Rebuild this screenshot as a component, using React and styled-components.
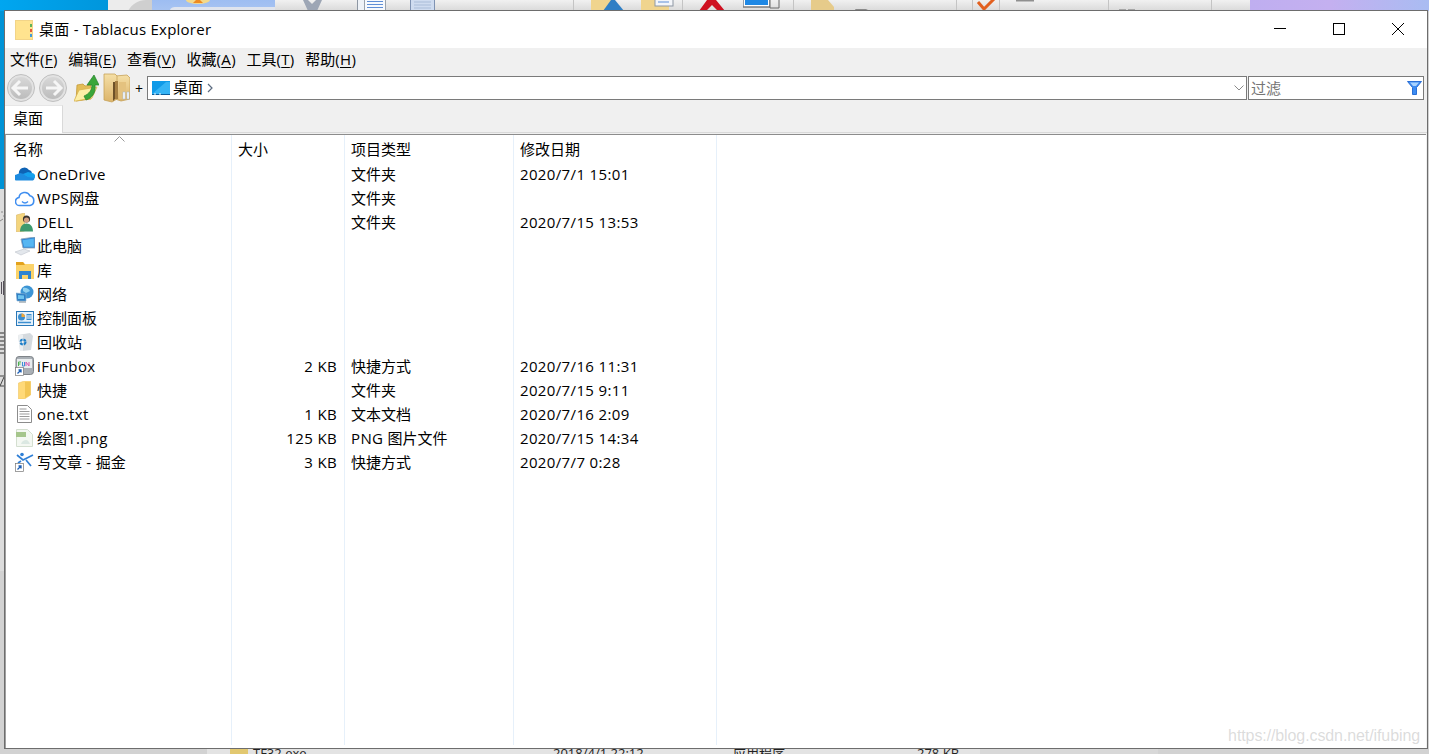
import React from 'react'
import styled, {createGlobalStyle} from 'styled-components'

const FONT = `"Open Sans", "Noto Sans CJK SC", sans-serif`

const Global = createGlobalStyle`
	html, body {
		margin: 0;
		padding: 0;
		height: 100%;
		overflow: hidden;
	}
	body {
		font-family: ${FONT};
		font-size: 15px;
		color: #000;
		background: #d2d2d2;
	}
	svg {
		display: block;
		flex: none;
	}
`

const Desktop = styled.div`
	position: relative;
	width: 1429px;
	height: 754px;
	overflow: hidden;
	background: #d2d2d2;
`
const TopStrip = styled.div`
	display: flex;
	height: 11px;
	overflow: hidden;
`
const Segment = styled.div`
	width: ${props => props.w}px;
	flex: ${props => (props.grow ? 1 : 'none')};
	height: 11px;
	background: ${props => props.bg || 'linear-gradient(#f1f1f1, #d9d9d9)'};
	border-right: ${props => (props.line ? '1px solid #c4c4c4' : 'none')};
	box-sizing: border-box;
	overflow: hidden;
	display: flex;
	padding-left: ${props => props.pad || 0}px;
	gap: ${props => props.gap || 0}px;
`
const LeftColumn = styled.div`
	width: 4px;
	height: 560px;
	overflow: hidden;
	background: linear-gradient(#0093d6 178px, #dcdcdc 178px);
	padding-top: 198px;
	box-sizing: border-box;
`
const LeftMark = styled.div`
	width: 4px;
	height: ${props => props.h}px;
	margin-bottom: ${props => props.mb}px;
`
const BottomStrip = styled.div`
	position: absolute;
	left: 207px;
	width: 951px;
	bottom: 0;
	height: 6px;
	background: linear-gradient(90deg, #e3e3e3 773px, #d8d8d8 773px);
	overflow: hidden;
	display: flex;
	font-size: 13px;
	line-height: 11px;
	color: #222;
	padding-left: 23px;
	box-sizing: border-box;
`
const BottomCell = styled.span`
	width: ${props => props.w}px;
	flex: none;
	white-space: nowrap;
	display: flex;
	gap: 5px;
`
const Window = styled.div`
	position: absolute;
	left: 4px;
	top: 10px;
	width: 1424px;
	height: 739px;
	box-sizing: border-box;
	border: 1px solid #6d6d6d;
	background: #f0f0f0;
	display: flex;
	flex-direction: column;
`
const TitleBar = styled.div`
	height: 37px;
	flex: none;
	background: #fff;
	display: flex;
	align-items: center;
	padding-left: 10px;
`
const Title = styled.div`
	margin-left: 5px;
	flex: 1;
	line-height: 37px;
	letter-spacing: 0.25px;
`
const WinButton = styled.div`
	width: 59px;
	height: 37px;
	display: flex;
	align-items: center;
	justify-content: center;
	padding-bottom: 2px;
	box-sizing: border-box;
`
const MenuBar = styled.div`
	height: 24px;
	flex: none;
	display: flex;
	align-items: center;
	gap: 10.5px;
	padding-left: 5px;
`
const MenuItem = styled.span`
	line-height: 22px;
	height: 24px;
	white-space: nowrap;
	u {
		text-underline-offset: 2px;
	}
`
const Latin = styled.span`
	letter-spacing: 0.36px;
`
const ToolBar = styled.div`
	height: 24px;
	margin-top: 4px;
	flex: none;
	display: flex;
	align-items: center;
	padding-left: 2px;
	padding-right: 3px;
`
const RoundButton = styled.div`
	width: 28px;
	height: 28px;
	margin-right: ${props => props.mr || 0}px;
	flex: none;
`
const ToolIcon = styled.div`
	margin-left: ${props => props.ml}px;
	flex: none;
`
const Plus = styled.span`
	width: 12px;
	margin-left: 5px;
	font-size: 14px;
	flex: none;
`
const AddressBox = styled.div`
	flex: 1;
	height: 24px;
	box-sizing: border-box;
	border: 1px solid #7a7a7a;
	background: #fff;
	display: flex;
	align-items: center;
	padding: 0 2px 0 4px;
	gap: 3px;
`
const Crumb = styled.span`
	line-height: 20px;
	height: 22px;
`
const CrumbArrow = styled.div`
	margin-left: 1px;
	flex: 1;
`
const FilterBox = styled.div`
	width: 176px;
	margin-left: 1px;
	height: 24px;
	box-sizing: border-box;
	border: 1px solid #7a7a7a;
	background: #fff;
	display: flex;
	align-items: center;
	justify-content: space-between;
	padding: 0 1px 0 2px;
	flex: none;
`
const FilterHint = styled.span`
	color: #757575;
	line-height: 22px;
`
const TabBar = styled.div`
	height: 33px;
	padding-top: 5px;
	box-sizing: border-box;
	flex: none;
	border-bottom: 1px solid #d9d9d9;
	margin-bottom: 1px;
`
const Tab = styled.div`
	width: 58px;
	height: 28px;
	box-sizing: border-box;
	background: #fff;
	border-right: 1px solid #d9d9d9;
	border-top: 1px solid #e6e6e6;
	padding-left: 8px;
	line-height: 24px;
`
const List = styled.div`
	flex: 1;
	min-height: 0;
	display: flex;
	background: #fff;
	border-top: 1px solid #8c8c8c;
	border-left: 1px solid #a0a0a0;
	margin-right: 1px;
	position: relative;
	padding-bottom: 3px;
`
const Column = styled.div`
	width: ${props => props.w}px;
	flex: none;
	box-sizing: border-box;
	border-right: 1px solid #e6f0fa;
`
const HeaderCell = styled.div`
	height: 27px;
	line-height: 28px;
	padding-left: ${props => props.pad || 6}px;
	white-space: nowrap;
`
const Cell = styled.div`
	height: 24px;
	line-height: 24px;
	white-space: nowrap;
	display: flex;
	align-items: center;
	padding: 0 7px 0 6px;
	justify-content: ${props => (props.right ? 'flex-end' : 'flex-start')};
`
const NameCell = styled(Cell)`
	padding-left: 9px;
	gap: 3px;
`
const IconSlot = styled.div`
	width: 19px;
	height: 20px;
	flex: none;
	display: flex;
	align-items: center;
	justify-content: center;
`
const SortCaret = styled.div`
	position: absolute;
	left: 108px;
	top: 1px;
`
const Watermark = styled.div`
	position: absolute;
	right: 9px;
	bottom: 8px;
	font-family: "Liberation Sans", sans-serif;
	font-size: 16px;
	line-height: 20px;
	letter-spacing: -0.1px;
	color: rgba(170, 170, 170, 0.42);
`

// latin runs are a little wider in the original font
const Mixed = ({text}) =>
	(text || '')
		.split(/([\x00-\x7f]+)/)
		.filter(Boolean)
		.map((part, i) => (/^[\x00-\x7f]/.test(part) ? <Latin key={i}>{part}</Latin> : <span key={i}>{part}</span>))

const FolderNote = () => (
	<svg width="19" height="20" viewBox="0 0 19 20">
		<rect x="0.5" y="0.5" width="17" height="19" fill="#ffe38f" stroke="#f2d488" />
		<rect x="15" y="4" width="2" height="3" fill="#5fb35a" />
		<rect x="15" y="9" width="2" height="3" fill="#e25b3c" />
		<rect x="15" y="14" width="2" height="3" fill="#3f9bd8" />
	</svg>
)
const Minimize = () => (
	<svg width="12" height="12" viewBox="0 0 12 12">
		<path d="M0 5.5H12" stroke="#000" />
	</svg>
)
const Maximize = () => (
	<svg width="12" height="12" viewBox="0 0 12 12">
		<rect x="0.5" y="0.5" width="11" height="11" fill="none" stroke="#000" />
	</svg>
)
const Close = () => (
	<svg width="12" height="12" viewBox="0 0 12 12">
		<path d="M0 0L12 12M12 0L0 12" stroke="#000" />
	</svg>
)
const NavArrow = ({flip}) => (
	<svg width="28" height="28" viewBox="0 0 28 28">
		<defs>
			<linearGradient id="navg" x1="0" y1="0" x2="0" y2="1">
				<stop offset="0" stopColor="#d8d8d8" />
				<stop offset="1" stopColor="#bcbcbc" />
			</linearGradient>
		</defs>
		<circle cx="14" cy="14" r="13.5" fill="#e2e2e2" stroke="#bfbfbf" />
		<circle cx="14" cy="14" r="11" fill="url(#navg)" />
		<path
			d={flip ? 'M15 7l7 7-7 7M22 14H7' : 'M13 7l-7 7 7 7M6 14h15'}
			fill="none"
			stroke="#f6f6f6"
			strokeWidth="3"
		/>
	</svg>
)
const UpFolder = () => (
	<svg width="25" height="28" viewBox="0 0 25 28">
		<path d="M3 11l6-1 2 2 6-1v14l-15 2z" fill="#e3bd57" stroke="#c49a3a" strokeWidth="0.8" />
		<path d="M5 16l18-3-5 11-16 3H0z" fill="#fdeea6" stroke="#d8b34e" strokeWidth="0.8" />
		<path d="M10 22c5-2 8-6 8-11h-5l7-10 5 10h-4c1 8-3 13-9 15z" fill="#3aa63a" stroke="#23812a" strokeWidth="0.7" />
	</svg>
)
const TallFolders = () => (
	<svg width="27" height="30" viewBox="0 0 27 30">
		<defs>
			<linearGradient id="tan" x1="0" y1="0" x2="0" y2="1">
				<stop offset="0" stopColor="#f5dfa6" />
				<stop offset="1" stopColor="#dcb46a" />
			</linearGradient>
		</defs>
		<path d="M12 3l12-1 3 3v21l-9 2-6-2z" fill="url(#tan)" stroke="#c6a259" strokeWidth="0.8" />
		<path d="M1 1h11l2 2v23l-5 3-8-2z" fill="url(#tan)" stroke="#c6a259" strokeWidth="0.8" />
		<path d="M10 9h2v17l-2 2z" fill="#6e5128" />
		<path d="M12 8h3v18h-3z" fill="#a67f42" />
		<path d="M16 9h7v17h-7z" fill="#e4c27f" />
		<rect x="20" y="19" width="2" height="7" fill="#fff" stroke="#9db6d8" strokeWidth="0.5" />
		<rect x="24" y="19" width="2" height="7" fill="#fff" stroke="#9db6d8" strokeWidth="0.5" />
	</svg>
)
const DesktopBlue = () => (
	<svg width="18" height="14" viewBox="0 0 18 14">
		<rect width="18" height="14" fill="#0f9ae8" />
		<path d="M0 13L14 1h4v12z" fill="#35b4f5" />
		<path d="M0 13h18v1H0z" fill="#0a5d9c" />
		<path d="M2 13h2M7 13h2" stroke="#fff" />
	</svg>
)
const SmallArrow = () => (
	<svg width="6" height="10" viewBox="0 0 6 10">
		<path d="M1 1l4 4-4 4" fill="none" stroke="#5b6b80" strokeWidth="1.2" />
	</svg>
)
const Chevron = () => (
	<svg width="10" height="6" viewBox="0 0 10 6">
		<path d="M0.5 0.5L5 5l4.5-4.5" fill="none" stroke="#8a8a8a" />
	</svg>
)
const Funnel = () => (
	<svg width="15" height="14" viewBox="0 0 15 14">
		<path d="M0.5 0.5h14L9.5 6.5v7h-4v-7z" fill="#3d8cf2" stroke="#2a6fd6" />
		<path d="M3 1.5h9L9 5H6z" fill="#a9d3ff" />
	</svg>
)
const Caret = () => (
	<svg width="11" height="6" viewBox="0 0 11 6">
		<path d="M0.5 5.5l5-5 5 5" fill="none" stroke="#9a9a9a" />
	</svg>
)

const Shortcut = () => (
	<g>
		<rect x="0.5" y="11.5" width="8" height="8" fill="#fff" stroke="#777" strokeWidth="0.7" />
		<path d="M2.5 17.500l3.500-3.500M3.500 14H6v2.500" fill="none" stroke="#1d5fb5" strokeWidth="1.300" />
	</g>
)
const OneDriveIcon = () => (
	<svg width="20" height="14" viewBox="0 0 20 14">
		<path d="M4 7a5.500 5.500 0 0 1 10-4 4 4 0 0 1 3 4l-9 2z" fill="#0e63b5" />
		<path d="M2.500 13.500A3 3 0 0 1 1.500 7.500L5 6l4 1 3 2 7 1a2.500 2.500 0 0 1-1 3.500z" fill="#1c8be0" />
		<path d="M8 7l5-2 4 1a3.500 3.500 0 0 1 3 5l-7-1z" fill="#15a1ee" />
	</svg>
)
const WpsIcon = () => (
	<svg width="20" height="17" viewBox="0 0 20 17">
		<path
			d="M5 15.500a4 4 0 0 1-1-8 5.800 5.800 0 0 1 11-1.700 5 5 0 0 1 0 9.700z"
			fill="#fff"
			stroke="#3f8ef0"
			strokeWidth="1.600"
		/>
		<path d="M7 11.500c2 2 4 2 6 0" fill="none" stroke="#3f8ef0" strokeWidth="1.400" />
	</svg>
)
const UserIcon = () => (
	<svg width="17" height="19" viewBox="0 0 17 19">
		<path d="M0.500 2l8-2v18l-8 1z" fill="#f4d57d" stroke="#dab765" strokeWidth="0.600" />
		<circle cx="10.500" cy="6" r="3.600" fill="#3b3530" />
		<circle cx="10.500" cy="7" r="2.600" fill="#d39f80" />
		<path d="M4 18.500c0-5 2.500-8 6.500-8s6.500 3 6.500 8z" fill="#3d9a6e" />
	</svg>
)
const ComputerIcon = () => (
	<svg width="20" height="19" viewBox="0 0 20 19">
		<path d="M6 2l14-2v11L8 11z" fill="#2f86d6" stroke="#8ca3b8" strokeWidth="0.800" />
		<path d="M7.500 3.300L18.800 1.500v8.200L9 9.800z" fill="#56b6f2" />
		<path d="M0 15l9-3 6 2-9 4z" fill="#e3e7ec" stroke="#bfc5cc" strokeWidth="0.600" />
	</svg>
)
const LibraryIcon = () => (
	<svg width="18" height="17" viewBox="0 0 18 17">
		<path d="M0 0h7l2 2h9v15H0z" fill="#fbd36a" />
		<path d="M0 0h7l2 3H0z" fill="#e3a21d" />
		<path d="M3 9h12v8h-3v-4H6v4H3z" fill="#2f84d0" />
	</svg>
)
const NetworkIcon = () => (
	<svg width="18" height="18" viewBox="0 0 18 18">
		<circle cx="11" cy="7" r="6.500" fill="#3d94d4" />
		<path d="M7 3c3-1 6 1 7 3l-4 2-3-2z" fill="#8fd0ef" />
		<path d="M0 8l10 1v7H1z" fill="#2e7fc5" stroke="#8bb4d3" strokeWidth="0.600" />
		<path d="M2 10l6 .5V14H2z" fill="#6ec3ee" />
		<path d="M3 17h7" stroke="#8d9aa5" strokeWidth="1.200" />
	</svg>
)
const PanelIcon = () => (
	<svg width="18" height="15" viewBox="0 0 18 15">
		<rect x="0.500" y="0.500" width="17" height="14" fill="#e6f2fb" stroke="#2a78b8" />
		<circle cx="5.500" cy="6" r="3.500" fill="#3c8fd0" />
		<path d="M5.500 6V2.500a3.500 3.500 0 0 1 3.500 3.500z" fill="#f2a83a" />
		<rect x="10.500" y="3" width="5" height="6" fill="#3c8fd0" />
		<path d="M10.500 5h5M10.500 7h5" stroke="#fff" />
		<path d="M2 11.500h13" stroke="#3c8fd0" strokeWidth="1.500" />
	</svg>
)
const BinIcon = () => (
	<svg width="16" height="18" viewBox="0 0 16 18">
		<path d="M1 2l12-2 3 3-2 14-9 1-2-1z" fill="#d5dade" />
		<path d="M1 2h5v16H3z" fill="#eceff1" />
		<circle cx="6" cy="9" r="2.500" fill="none" stroke="#1f7fc8" strokeWidth="2.200" strokeDasharray="3 1" />
	</svg>
)
const FunboxIcon = () => (
	<svg width="19" height="20" viewBox="0 0 19 20">
		<rect x="1" y="0.500" width="17.500" height="18" rx="3" fill="#a9afb5" stroke="#7f8489" />
		<rect x="2" y="3" width="15" height="9" fill="#e8ecee" />
		<path d="M3.500 10V6h2.500M3.500 8h2" fill="none" stroke="#4fb04f" />
		<path d="M7.500 6v4h2V6" fill="none" stroke="#3f8fd6" />
		<path d="M11 10V6l3 4V6" fill="none" stroke="#d65ab0" />
		<Shortcut />
	</svg>
)
const YellowFolder = () => (
	<svg width="13" height="18" viewBox="0 0 13 18">
		<path d="M0.500 2l6-2h6v14l-6 4h-6z" fill="#ffd978" stroke="#eec664" strokeWidth="0.600" />
		<path d="M7 1h5.500v13L7 17z" fill="#f3c655" />
	</svg>
)
const TextIcon = () => (
	<svg width="15" height="18" viewBox="0 0 15 18">
		<path d="M0.500 0.500h10l4 4v13H0.500z" fill="#fff" stroke="#8c8c8c" />
		<path d="M2.500 4h7M2.500 6.500h10M2.500 9h10M2.500 11.500h10M2.500 14h10" stroke="#9a9a9a" />
	</svg>
)
const PngIcon = () => (
	<svg width="17" height="18" viewBox="0 0 17 18">
		<path d="M0.500 0.500h11l5 5v12H0.500z" fill="#f4f8f2" stroke="#d4dfd0" />
		<rect x="0" y="3" width="10" height="5" fill="#a6c68c" />
		<path d="M5 15c1-3 3-4 5-4s3 2 4 4z" fill="#dbe8e2" />
	</svg>
)
const SparkIcon = () => (
	<svg width="19" height="20" viewBox="0 0 19 20">
		<circle cx="7" cy="2.500" r="1.800" fill="#2f7fd6" />
		<path d="M2 3l6 5 10-5M6 9l-3 2M11 8l5 6" fill="none" stroke="#2f7fd6" strokeWidth="1.700" />
		<Shortcut />
	</svg>
)

const StripBanner = () => (
	<svg width="123" height="11" viewBox="0 0 123 11">
		<ellipse cx="46" cy="0" rx="12" ry="4" fill="#f4d98a" />
		<path d="M41 3l3-3h4l3 3z" fill="#ef8a1f" />
		<path d="M18 11c0-3 2-4 6-4h99v4z" fill="#dfe4ee" />
	</svg>
)
const StripSwirl = () => (
	<svg width="44" height="11" viewBox="0 0 44 11">
		<path d="M20 11C24 4 30 0 38 0h6v11z" fill="#cfcfcf" />
	</svg>
)
const StripX = () => (
	<svg width="20" height="11" viewBox="0 0 20 11">
		<path d="M0 0h5l4 4 4-4h6l-5 11H5z" fill="#9da6b5" />
	</svg>
)
const StripDocs = () => (
	<svg width="29" height="11" viewBox="0 0 29 11">
		<rect x="0.500" y="-2" width="10" height="13" fill="#eef2f7" stroke="#8e97a3" />
		<rect x="7.500" y="-2" width="21" height="13" fill="#f6f9fd" stroke="#9aa3ae" />
		<path d="M10 1.500h16M10 4.500h16M10 7.500h16" stroke="#5f8ed6" />
	</svg>
)
const StripPage = () => (
	<svg width="25" height="11" viewBox="0 0 25 11">
		<rect x="0.500" y="-2" width="24" height="13" fill="#cfdcf0" stroke="#7f93b3" />
		<path d="M4 2h17M4 5h17M4 8h17" stroke="#a9bcd8" />
	</svg>
)
const StripFolderBlue = () => (
	<svg width="34" height="11" viewBox="0 0 34 11">
		<rect width="22" height="11" fill="#f0d48e" />
		<path d="M12 11l8-11h4l9 11z" fill="#2f7fc5" />
	</svg>
)
const StripFolderNote = () => (
	<svg width="34" height="11" viewBox="0 0 34 11">
		<rect width="28" height="11" fill="#f0d48e" />
		<rect x="14" y="-2" width="18" height="8" fill="#f4f6fa" stroke="#8e97a3" />
		<path d="M17 2h11" stroke="#5f8ed6" />
	</svg>
)
const StripRedX = () => (
	<svg width="30" height="11" viewBox="0 0 30 11">
		<path d="M1 11L9 0h9l9 11h-7l-6-6-6 6z" fill="#cf1020" />
	</svg>
)
const StripBlueBox = () => (
	<svg width="38" height="11" viewBox="0 0 38 11">
		<rect x="0.500" y="-2" width="26" height="9" fill="#fff" stroke="#97a0aa" />
		<rect x="2" y="-2" width="23" height="7" fill="#1e88e5" />
		<path d="M27 -2v10h9V-2M0 7h27" fill="none" stroke="#6a6a6a" />
	</svg>
)
const StripFolder = () => (
	<svg width="24" height="11" viewBox="0 0 24 11">
		<path d="M0 0h17l6 7v4H0z" fill="#e6cb8a" />
	</svg>
)
const StripOutline = () => (
	<svg width="15" height="11" viewBox="0 0 15 11">
		<path d="M0.500 11V9.500h11l2 1.500" fill="none" stroke="#8a8a8a" />
	</svg>
)
const StripCheck = () => (
	<svg width="20" height="11" viewBox="0 0 20 11">
		<path d="M2 2l6 7 10-10" fill="none" stroke="#e2601f" strokeWidth="3" />
	</svg>
)
const StripBar = () => (
	<svg width="18" height="11" viewBox="0 0 18 11">
		<rect width="18" height="1.500" fill="#8f8f8f" />
	</svg>
)
const StripTabs = () => (
	<svg width="16" height="11" viewBox="0 0 16 11">
		<path d="M0 9h7v2H0zM9 9h7v2H9z" fill="#a6a6a6" />
	</svg>
)

const MarkDots = () => (
	<svg width="4" height="16" viewBox="0 0 4 16">
		<path d="M1 3h2M3 7h1M0 12l3-2" stroke="#8a8a8a" />
	</svg>
)
const MarkStrokes = () => (
	<svg width="4" height="18" viewBox="0 0 4 18">
		<path d="M1.500 3v12M3.500 2v14" stroke="#55505a" />
	</svg>
)
const MarkStripes = () => (
	<svg width="4" height="24" viewBox="0 0 4 24">
		<path d="M0 2h4M0 6h4M0 10h4M0 14h4M0 18h4M0 22h4" stroke="#858585" strokeWidth="2" />
	</svg>
)
const MarkDiagonal = () => (
	<svg width="4" height="16" viewBox="0 0 4 16">
		<path d="M0 3h4M4 4L0 13h4" fill="none" stroke="#444" />
	</svg>
)

const segments = [
	{w: 108, bg: 'linear-gradient(90deg, #00a6f0, #0096dc)'},
	{w: 44, bg: '#ececec', icons: [<StripSwirl key="a" />]},
	{w: 123, bg: 'linear-gradient(#9dbdf2, #a8c4f2)', icons: [<StripBanner key="a" />]},
	{w: 82, pad: 28, icons: [<StripX key="a" />]},
	{w: 53, icons: [<StripDocs key="a" />]},
	{w: 164, line: true, icons: [<StripPage key="a" />]},
	{w: 109, pad: 17, gap: 16, line: true, icons: [<StripFolderBlue key="a" />, <StripFolderNote key="b" />]},
	{w: 111, pad: 15, gap: 15, line: true, icons: [<StripRedX key="a" />, <StripBlueBox key="b" />]},
	{w: 163, pad: 17, gap: 20, line: true, icons: [<StripFolder key="a" />, <StripOutline key="b" />]},
	{w: 16, line: true},
	{w: 27, pad: 3, line: true, icons: [<StripCheck key="a" />]},
	{w: 109, pad: 16, line: true, icons: [<StripBar key="a" />]},
	{w: 103, pad: 10, line: true, icons: [<StripTabs key="a" />]},
	{w: 38},
	{grow: true, bg: 'linear-gradient(90deg, #bfaef0, #c4b0f0 45%, #a9bcf2)'}
]

const menus = [
	['文件', 'F'],
	['编辑', 'E'],
	['查看', 'V'],
	['收藏', 'A'],
	['工具', 'T'],
	['帮助', 'H']
]

const rows = [
	{name: 'OneDrive', icon: <OneDriveIcon />, type: '文件夹', date: '2020/7/1 15:01'},
	{name: 'WPS网盘', icon: <WpsIcon />, type: '文件夹'},
	{name: 'DELL', icon: <UserIcon />, type: '文件夹', date: '2020/7/15 13:53'},
	{name: '此电脑', icon: <ComputerIcon />},
	{name: '库', icon: <LibraryIcon />},
	{name: '网络', icon: <NetworkIcon />},
	{name: '控制面板', icon: <PanelIcon />},
	{name: '回收站', icon: <BinIcon />},
	{name: 'iFunbox', icon: <FunboxIcon />, size: '2 KB', type: '快捷方式', date: '2020/7/16 11:31'},
	{name: '快捷', icon: <YellowFolder />, type: '文件夹', date: '2020/7/15 9:11'},
	{name: 'one.txt', icon: <TextIcon />, size: '1 KB', type: '文本文档', date: '2020/7/16 2:09'},
	{name: '绘图1.png', icon: <PngIcon />, size: '125 KB', type: 'PNG 图片文件', date: '2020/7/15 14:34'},
	{name: '写文章 - 掘金', icon: <SparkIcon />, size: '3 KB', type: '快捷方式', date: '2020/7/7 0:28'}
]

const App = () => (
	<Desktop>
		<Global />
		<TopStrip>
			{segments.map((s, i) => (
				<Segment key={i} w={s.w} grow={s.grow} bg={s.bg} line={s.line} pad={s.pad} gap={s.gap}>
					{s.icons}
				</Segment>
			))}
		</TopStrip>
		<LeftColumn>
			<LeftMark h={16} mb={54}>
				<MarkDots />
			</LeftMark>
			<LeftMark h={18} mb={34}>
				<MarkStrokes />
			</LeftMark>
			<LeftMark h={24} mb={18}>
				<MarkStripes />
			</LeftMark>
			<LeftMark h={16} mb={0}>
				<MarkDiagonal />
			</LeftMark>
		</LeftColumn>
		<BottomStrip>
			<BottomCell w={323}>
				<svg width="18" height="11" viewBox="0 0 18 11">
					<rect width="18" height="11" fill="#e2c870" />
				</svg>
				TF32.exe
			</BottomCell>
			<BottomCell w={180}>2018/4/1 22:12</BottomCell>
			<BottomCell w={184}>应用程序</BottomCell>
			<BottomCell w={60}>278 KB</BottomCell>
		</BottomStrip>
		<Window>
			<TitleBar>
				<FolderNote />
				<Title>桌面 - Tablacus Explorer</Title>
				<WinButton>
					<Minimize />
				</WinButton>
				<WinButton>
					<Maximize />
				</WinButton>
				<WinButton>
					<Close />
				</WinButton>
			</TitleBar>
			<MenuBar>
				{menus.map(([label, key]) => (
					<MenuItem key={key}>
						{label}
						<Latin>
							(<u>{key}</u>)
						</Latin>
					</MenuItem>
				))}
			</MenuBar>
			<ToolBar>
				<RoundButton mr={4}>
					<NavArrow />
				</RoundButton>
				<RoundButton>
					<NavArrow flip />
				</RoundButton>
				<ToolIcon ml={7}>
					<UpFolder />
				</ToolIcon>
				<ToolIcon ml={4}>
					<TallFolders />
				</ToolIcon>
				<Plus>+</Plus>
				<AddressBox>
					<DesktopBlue />
					<Crumb>桌面</Crumb>
					<CrumbArrow>
						<SmallArrow />
					</CrumbArrow>
					<Chevron />
				</AddressBox>
				<FilterBox>
					<FilterHint>过滤</FilterHint>
					<Funnel />
				</FilterBox>
			</ToolBar>
			<TabBar>
				<Tab>桌面</Tab>
			</TabBar>
			<List>
				<SortCaret>
					<Caret />
				</SortCaret>
				<Column w={226}>
					<HeaderCell pad={7}>名称</HeaderCell>
					{rows.map(r => (
						<NameCell key={r.name}>
							<IconSlot>{r.icon}</IconSlot>
							<span>
								<Mixed text={r.name} />
							</span>
						</NameCell>
					))}
				</Column>
				<Column w={113}>
					<HeaderCell>大小</HeaderCell>
					{rows.map(r => (
						<Cell key={r.name} right>
							<span>
								<Mixed text={r.size} />
							</span>
						</Cell>
					))}
				</Column>
				<Column w={169}>
					<HeaderCell>项目类型</HeaderCell>
					{rows.map(r => (
						<Cell key={r.name}>
							<span>
								<Mixed text={r.type} />
							</span>
						</Cell>
					))}
				</Column>
				<Column w={203}>
					<HeaderCell>修改日期</HeaderCell>
					{rows.map(r => (
						<Cell key={r.name}>
							<span>
								<Mixed text={r.date} />
							</span>
						</Cell>
					))}
				</Column>
			</List>
		</Window>
		<Watermark>https://blog.csdn.net/ifubing</Watermark>
	</Desktop>
)

export default App
